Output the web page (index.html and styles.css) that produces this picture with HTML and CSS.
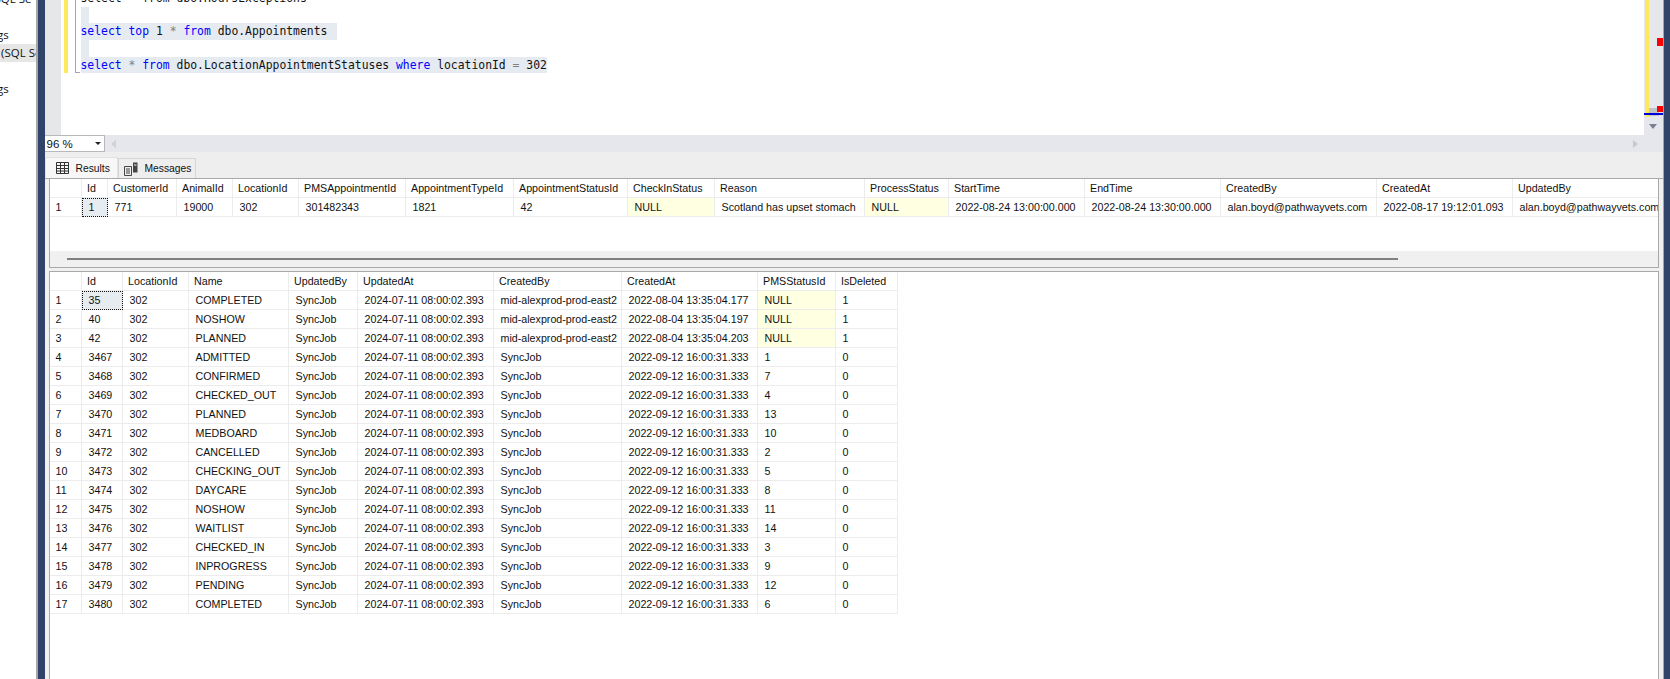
FILE: index.html
```html
<!DOCTYPE html>
<html lang="en">
<head>
  <meta charset="UTF-8">
  <title>SQL query results</title>
  <link rel="stylesheet" href="styles.css">
</head>
<body>
<div class="window">

  <!-- object explorer, mostly cut off -->
  <aside class="explorer">
    <div class="tree-row clip-sql">(SQL Se</div>
    <div class="tree-row"></div>
    <div class="tree-row clip-gs">Settings</div>
    <div class="tree-row clip-open selected">(SQL Server 15.0)</div>
    <div class="tree-row"></div>
    <div class="tree-row clip-gs">Settings</div>
  </aside>
  <div class="splitter"></div>

  <main class="main">

    <section class="editor">
      <div class="gutter"></div>
      <div class="change-bar"></div>
      <div class="outline"></div>
      <div class="code">
        <div class="line">select * from dbo.HoursExceptions</div>
        <div class="line"><span class="sel empty"></span></div>
        <div class="line"><span class="sel trailing"><b>select</b> <b>top</b> 1 <i>*</i> <b>from</b> dbo.Appointments&nbsp;</span></div>
        <div class="line"><span class="sel empty"></span></div>
        <div class="line"><span class="sel"><b>select</b> <i>*</i> <b>from</b> dbo.LocationAppointmentStatuses <b>where</b> locationId <i>=</i> 302</span></div>
      </div>
      <div class="map">
        <div class="map-track">
          <div class="map-yellow"></div>
          <div class="map-red first"></div>
          <div class="map-thumb"></div>
          <div class="map-red second"></div>
          <div class="map-blue"></div>
        </div>
        <div class="map-down"></div>
      </div>
    </section>

    <div class="zoombar">
      <div class="zoom-combo"><span>96 %</span><span class="combo-arrow"></span></div>
      <span class="arrow-left"></span>
      <span class="arrow-right"></span>
    </div>

    <nav class="tabs">
      <div class="tab active">
        <svg width="13" height="12" viewBox="0 0 13 12"><path d="M.5.5h12v11H.5zM.5 3.500h12M.5 6.500h12M.5 9h12M4.500 .5v11M8.500 .5v11" fill="none" stroke="#333"/></svg>
        <span>Results</span>
      </div>
      <div class="tab">
        <svg width="14" height="14" viewBox="0 0 14 14"><path d="M.5 4.500h7v9h-7zM2 7h4M2 9h4M2 11h4" fill="none" stroke="#444"/><path d="M9 .5h4.500v10H9z" fill="#444"/><path d="M7.500 2.500H9M10 3h2.500" stroke="#eee" fill="none"/></svg>
        <span>Messages</span>
      </div>
    </nav>

    <div class="results">
      <section class="grid grid-top">
        <div class="grid-body">
          <table class="wide">
            <colgroup>
              <col class="c-row"><col style="width:26px"><col style="width:69px"><col style="width:56px"><col style="width:66px"><col style="width:107px"><col style="width:108px"><col style="width:114px"><col style="width:87px"><col style="width:150px"><col style="width:84px"><col style="width:136px"><col style="width:136px"><col style="width:156px"><col style="width:136px"><col style="width:160px">
            </colgroup>
            <tr><th></th><th>Id</th><th>CustomerId</th><th>AnimalId</th><th>LocationId</th><th>PMSAppointmentId</th><th>AppointmentTypeId</th><th>AppointmentStatusId</th><th>CheckInStatus</th><th>Reason</th><th>ProcessStatus</th><th>StartTime</th><th>EndTime</th><th>CreatedBy</th><th>CreatedAt</th><th>UpdatedBy</th></tr>
            <tr><td class="rownum">1</td><td class="current">1</td><td>771</td><td>19000</td><td>302</td><td>301482343</td><td>1821</td><td>42</td><td class="null">NULL</td><td>Scotland has upset stomach</td><td class="null">NULL</td><td>2022-08-24 13:00:00.000</td><td>2022-08-24 13:30:00.000</td><td>alan.boyd@pathwayvets.com</td><td>2022-08-17 19:12:01.093</td><td>alan.boyd@pathwayvets.com</td></tr>
          </table>
        </div>
        <div class="hscroll"><div class="hscroll-thumb"></div></div>
      </section>

      <section class="grid grid-bottom">
        <table class="narrow">
          <colgroup>
            <col class="c-row"><col style="width:41px"><col style="width:66px"><col style="width:100px"><col style="width:69px"><col style="width:136px"><col style="width:128px"><col style="width:136px"><col style="width:78px"><col style="width:62px">
          </colgroup>
          <tr><th></th><th>Id</th><th>LocationId</th><th>Name</th><th>UpdatedBy</th><th>UpdatedAt</th><th>CreatedBy</th><th>CreatedAt</th><th>PMSStatusId</th><th>IsDeleted</th></tr>
          <tr><td class="rownum">1</td><td class="current">35</td><td>302</td><td>COMPLETED</td><td>SyncJob</td><td>2024-07-11 08:00:02.393</td><td>mid-alexprod-prod-east2</td><td>2022-08-04 13:35:04.177</td><td class="null">NULL</td><td>1</td></tr>
          <tr><td class="rownum">2</td><td>40</td><td>302</td><td>NOSHOW</td><td>SyncJob</td><td>2024-07-11 08:00:02.393</td><td>mid-alexprod-prod-east2</td><td>2022-08-04 13:35:04.197</td><td class="null">NULL</td><td>1</td></tr>
          <tr><td class="rownum">3</td><td>42</td><td>302</td><td>PLANNED</td><td>SyncJob</td><td>2024-07-11 08:00:02.393</td><td>mid-alexprod-prod-east2</td><td>2022-08-04 13:35:04.203</td><td class="null">NULL</td><td>1</td></tr>
          <tr><td class="rownum">4</td><td>3467</td><td>302</td><td>ADMITTED</td><td>SyncJob</td><td>2024-07-11 08:00:02.393</td><td>SyncJob</td><td>2022-09-12 16:00:31.333</td><td>1</td><td>0</td></tr>
          <tr><td class="rownum">5</td><td>3468</td><td>302</td><td>CONFIRMED</td><td>SyncJob</td><td>2024-07-11 08:00:02.393</td><td>SyncJob</td><td>2022-09-12 16:00:31.333</td><td>7</td><td>0</td></tr>
          <tr><td class="rownum">6</td><td>3469</td><td>302</td><td>CHECKED_OUT</td><td>SyncJob</td><td>2024-07-11 08:00:02.393</td><td>SyncJob</td><td>2022-09-12 16:00:31.333</td><td>4</td><td>0</td></tr>
          <tr><td class="rownum">7</td><td>3470</td><td>302</td><td>PLANNED</td><td>SyncJob</td><td>2024-07-11 08:00:02.393</td><td>SyncJob</td><td>2022-09-12 16:00:31.333</td><td>13</td><td>0</td></tr>
          <tr><td class="rownum">8</td><td>3471</td><td>302</td><td>MEDBOARD</td><td>SyncJob</td><td>2024-07-11 08:00:02.393</td><td>SyncJob</td><td>2022-09-12 16:00:31.333</td><td>10</td><td>0</td></tr>
          <tr><td class="rownum">9</td><td>3472</td><td>302</td><td>CANCELLED</td><td>SyncJob</td><td>2024-07-11 08:00:02.393</td><td>SyncJob</td><td>2022-09-12 16:00:31.333</td><td>2</td><td>0</td></tr>
          <tr><td class="rownum">10</td><td>3473</td><td>302</td><td>CHECKING_OUT</td><td>SyncJob</td><td>2024-07-11 08:00:02.393</td><td>SyncJob</td><td>2022-09-12 16:00:31.333</td><td>5</td><td>0</td></tr>
          <tr><td class="rownum">11</td><td>3474</td><td>302</td><td>DAYCARE</td><td>SyncJob</td><td>2024-07-11 08:00:02.393</td><td>SyncJob</td><td>2022-09-12 16:00:31.333</td><td>8</td><td>0</td></tr>
          <tr><td class="rownum">12</td><td>3475</td><td>302</td><td>NOSHOW</td><td>SyncJob</td><td>2024-07-11 08:00:02.393</td><td>SyncJob</td><td>2022-09-12 16:00:31.333</td><td>11</td><td>0</td></tr>
          <tr><td class="rownum">13</td><td>3476</td><td>302</td><td>WAITLIST</td><td>SyncJob</td><td>2024-07-11 08:00:02.393</td><td>SyncJob</td><td>2022-09-12 16:00:31.333</td><td>14</td><td>0</td></tr>
          <tr><td class="rownum">14</td><td>3477</td><td>302</td><td>CHECKED_IN</td><td>SyncJob</td><td>2024-07-11 08:00:02.393</td><td>SyncJob</td><td>2022-09-12 16:00:31.333</td><td>3</td><td>0</td></tr>
          <tr><td class="rownum">15</td><td>3478</td><td>302</td><td>INPROGRESS</td><td>SyncJob</td><td>2024-07-11 08:00:02.393</td><td>SyncJob</td><td>2022-09-12 16:00:31.333</td><td>9</td><td>0</td></tr>
          <tr><td class="rownum">16</td><td>3479</td><td>302</td><td>PENDING</td><td>SyncJob</td><td>2024-07-11 08:00:02.393</td><td>SyncJob</td><td>2022-09-12 16:00:31.333</td><td>12</td><td>0</td></tr>
          <tr><td class="rownum">17</td><td>3480</td><td>302</td><td>COMPLETED</td><td>SyncJob</td><td>2024-07-11 08:00:02.393</td><td>SyncJob</td><td>2022-09-12 16:00:31.333</td><td>6</td><td>0</td></tr>
        </table>
      </section>
    </div>
  </main>

  <div class="edge"></div>
</div>
</body>
</html>
```

FILE: styles.css
```css
/* page frame */
html, body {
  margin: 0;
  height: 100%;
  overflow: hidden;
  background: #fff;
}

.window {
  display: flex;
  height: 679px;
  font-family: "Liberation Sans", Arial, sans-serif;
  font-size: 10.7px;
  color: #111;
}

/* object explorer strip */
.explorer {
  width: 36px;
  flex: none;
  overflow: hidden;
  margin-top: -10px;
  font-family: "Open Sans", sans-serif;
  font-size: 11.500px;
}

.tree-row {
  height: 18px;
  line-height: 18px;
  white-space: nowrap;
  overflow: hidden;
}

.tree-row.selected { background: #e6e6e6; }
.clip-sql { text-indent: -9px; }
.clip-gs { text-indent: -34px; }
.clip-open { text-indent: 1px; }

.splitter {
  width: 8.500px;
  flex: none;
  box-sizing: border-box;
  background: #2f4468;
  border-left: 2px solid #a6a6a6;
}

.edge {
  width: 7px;
  flex: none;
  background: #2f4468;
  border-left: 1px solid #a6a6a6;
  box-sizing: border-box;
}

.main {
  flex: 1;
  min-width: 0;
  display: flex;
  flex-direction: column;
}

/* query editor */
.editor {
  height: 135px;
  flex: none;
  display: flex;
  overflow: hidden;
}

.gutter {
  width: 16px;
  flex: none;
  background: #e6e7e8;
}

.change-bar {
  width: 4px;
  height: 73px;
  flex: none;
  margin-left: 3px;
  background: #fee85c;
}

.outline {
  width: 4px;
  height: 72px;
  flex: none;
  margin-left: 7px;
  border-left: 1px solid #a5a5a5;
  border-bottom: 1px solid #a5a5a5;
}

.code {
  flex: 1;
  margin-top: -10px;
  margin-left: 1px;
  font-family: "DejaVu Sans Mono", monospace;
  font-size: 11.400px;
  color: #111;
}

.line {
  height: 16.650px;
  line-height: 16.650px;
  white-space: pre;
}

.sel {
  display: inline-block;
  height: 100%;
  background: #e5ebf1;
}

.sel.empty { width: 8px; }
.sel.trailing { padding-right: 3px; }
.code b { font-weight: normal; color: #0000ff; }
.code i { font-style: normal; color: #808080; }

/* the mini map scrollbar on the right */
.map {
  width: 19px;
  flex: none;
  background: #e6e7ed;
}

.map-track {
  position: relative;
  height: 117px;
}

.map-yellow {
  position: absolute;
  left: 1px;
  top: 0;
  width: 4px;
  height: 117px;
  background: #fee85c;
}

.map-red {
  position: absolute;
  left: 13px;
  width: 6px;
  background: #f00;
}

.map-red.first { top: 38px; height: 8px; }
.map-red.second { top: 106px; height: 6px; }

.map-thumb {
  position: absolute;
  left: 5px;
  top: 108px;
  width: 10px;
  height: 8px;
  background: #c2c3c9;
}

.map-blue {
  position: absolute;
  left: 0;
  right: 0;
  top: 113px;
  height: 2px;
  background: #0000d8;
}

.map-down {
  width: 0;
  margin: 7px 0 0 5px;
  border-left: 4.500px solid transparent;
  border-right: 4.500px solid transparent;
  border-top: 5px solid #7b7f92;
}

/* zoom + horizontal scroller strip */
.zoombar {
  height: 17px;
  flex: none;
  display: flex;
  align-items: center;
  background: #e6e7ed;
}

.zoom-combo {
  width: 60px;
  height: 17px;
  box-sizing: border-box;
  display: flex;
  align-items: center;
  justify-content: space-between;
  padding: 0 3px 0 2px;
  background: #fff;
  border: 1px solid #b8b8bc;
  border-left: none;
  font-size: 11.500px;
}

.combo-arrow {
  border-left: 3px solid transparent;
  border-right: 3px solid transparent;
  border-top: 3px solid #222;
}

.arrow-left {
  margin-left: 6px;
  border-top: 4.500px solid transparent;
  border-bottom: 4.500px solid transparent;
  border-right: 5px solid #cfd0d6;
}

.arrow-right {
  margin-left: auto;
  margin-right: 25px;
  border-top: 4.500px solid transparent;
  border-bottom: 4.500px solid transparent;
  border-left: 5px solid #c8c9cf;
}

/* result tabs */
.tabs {
  height: 26px;
  flex: none;
  box-sizing: border-box;
  display: flex;
  align-items: flex-end;
  background: #eeeeee;
  font-size: 10.300px;
}

.tab {
  display: flex;
  align-items: center;
  gap: 7px;
  box-sizing: border-box;
  height: 20px;
  padding: 0 4px 0 5px;
  border: 1px solid #d6d6d6;
  border-bottom: none;
}

.tab.active {
  width: 73px;
  height: 21px;
  padding-left: 10px;
  background: #f7f7f7;
  border-color: #e2e2e2;
}

.tab svg { flex: none; }

/* result grids */
.results {
  flex: 1;
  min-height: 0;
  box-sizing: border-box;
  padding: 0 4px;
  background: #f0f0f0;
  display: flex;
  flex-direction: column;
  gap: 3px;
  border-top: 1px solid #a9a9a9;
}

.grid {
  box-sizing: border-box;
  background: #fff;
  border: 1.500px solid #a9a9a9;
  overflow: hidden;
}

.grid-top {
  height: 89px;
  flex: none;
  display: flex;
  flex-direction: column;
  border-top: none;
}

.grid-body {
  flex: 1;
  min-height: 0;
  overflow: hidden;
}

.grid-bottom { flex: 1; border-bottom: none; }

table {
  border-collapse: separate;
  border-spacing: 0;
  table-layout: fixed;
}

table.wide { width: 1623px; }
table.narrow { width: 848px; }
col.c-row { width: 32px; }

th, td {
  box-sizing: border-box;
  height: 19px;
  padding: 0 2px 0 7px;
  font-weight: normal;
  text-align: left;
  white-space: nowrap;
  overflow: hidden;
  border-right: 1px solid #ececec;
  border-bottom: 1px solid #ececec;
}

th { padding-left: 5.500px; }
td.rownum { padding-left: 6px; }
td.null { background: #ffffe1; }

td.current {
  background: #e7ecf1;
  outline: 1px dotted #111;
  outline-offset: -1px;
}

.hscroll {
  height: 16px;
  flex: none;
  display: flex;
  align-items: center;
  background: #f0f0f0;
}

.hscroll-thumb {
  width: 1331px;
  height: 2px;
  margin-left: 17px;
  background: #808080;
}
```
